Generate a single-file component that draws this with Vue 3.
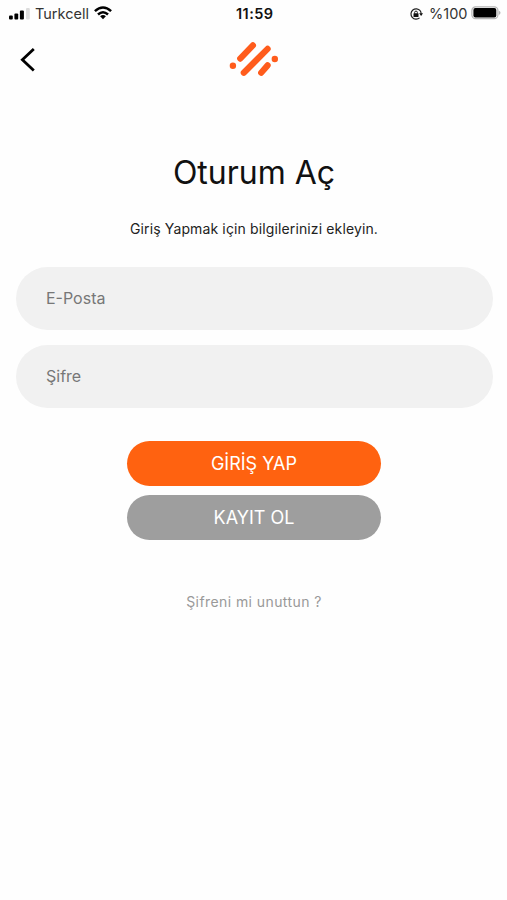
<script setup>
import { ref } from 'vue'

const email = ref('')
const password = ref('')
</script>

<template>
  <main class="screen">
    <div class="status">
      <div class="side left">
        <svg class="signal" width="21" height="13" viewBox="0 0 21 13">
          <rect x="0" y="8.5" width="3.8" height="4" rx="1" />
          <rect x="5.4" y="6.5" width="3.8" height="6" rx="1" />
          <rect x="10.9" y="3.6" width="4" height="8.9" rx="1" />
          <rect x="17" y="1" width="3.8" height="11.5" rx="1" fill="#dcdcdc" />
        </svg>
        <span class="carrier">Turkcell</span>
        <svg class="wifi" width="18" height="14" viewBox="0 0 18 14" fill="none" stroke="#000" stroke-width="2.5">
          <path d="M.9 5.2Q9-2.2 17.1 5.2" />
          <path d="M4 8.5Q9 3.9 14 8.5" />
          <path d="M6.1 10.3Q9 7.7 11.9 10.3L9 13.2Z" fill="#000" stroke="none" />
        </svg>
      </div>
      <span class="time">11:59</span>
      <div class="side right">
        <svg class="lock" width="14" height="14" viewBox="0 0 14 14" fill="none" stroke="#222">
          <path d="M11.2 3.7A5.2 5.2 0 1 0 10.6 10.9" stroke-width="1.2" />
          <path d="M10.2 6.3H14L12.1 9Z" fill="#111" stroke="none" />
          <path d="M11.2 3.7Q12.1 5 12.1 7" stroke-width="1.2" />
          <rect x="4.5" y="6.2" width="5" height="3.8" rx=".5" fill="#111" stroke="none" />
          <path d="M5.6 6.7V5.5a1.4 1.4 0 0 1 2.8 0v1.2" />
        </svg>
        <span class="percent">%100</span>
        <svg class="battery" width="30" height="14" viewBox="0 0 30 14">
          <rect x=".9" y=".9" width="26" height="11.8" rx="3.6" fill="#fff" stroke="#b5b5b5" stroke-width="1.2" />
          <rect x="2.4" y="2.1" width="22.9" height="9.4" rx="2" />
          <path d="M27.8 4.7q1.7.5 1.7 2.1t-1.7 2.1Z" fill="#b5b5b5" />
        </svg>
      </div>
    </div>

    <header class="nav">
      <button class="back" type="button" aria-label="Geri">
        <svg width="18" height="26" viewBox="0 0 18 26" fill="none" stroke="#000" stroke-width="2.8">
          <path d="M15.8 2L4.4 12.7L15.8 23.4" />
        </svg>
      </button>
      <svg class="logo" width="50" height="38" viewBox="0 0 50 38" fill="none" stroke="#ff5c1c" stroke-width="6.2" stroke-linecap="round">
        <path d="M11.2 18.6L23.9 5.4M14.8 32.7L38.6 8.9M32.2 32.7L38.6 25.4" />
        <circle cx="3.9" cy="25.8" r="3.2" fill="#ff5c1c" stroke="none" />
        <circle cx="45.8" cy="19" r="3.2" fill="#ff5c1c" stroke="none" />
      </svg>
    </header>

    <form class="login" @submit.prevent>
      <h1>Oturum Aç</h1>
      <p class="hint">Giriş Yapmak için bilgilerinizi ekleyin.</p>
      <input v-model="email" class="field" type="text" placeholder="E-Posta">
      <input v-model="password" class="field" type="password" placeholder="Şifre">
      <div class="actions">
        <button class="action primary" type="submit">GİRİŞ YAP</button>
        <button class="action secondary" type="button">KAYIT OL</button>
      </div>
      <a class="forgot">Şifreni mi unuttun ?</a>
    </form>
  </main>
</template>

<style>
body {
  background: #fefefe;
}
</style>

<style scoped>
.screen {
  box-sizing: border-box;
  height: 900px;
  overflow: hidden;
  background: #fefefe;
  color: #111;
  font-family: Inter, "Liberation Sans", sans-serif;
}
.status {
  display: grid;
  grid-template-columns: 1fr auto 1fr;
  align-items: center;
  height: 28px;
  padding: 0 6.5px 0 9px;
}
.side {
  display: flex;
  align-items: center;
}
.right {
  justify-content: flex-end;
}
.status span {
  font-size: 14.5px;
  line-height: 28px;
  white-space: nowrap;
}
.signal {
  margin-bottom: 1px;
}
.carrier {
  margin-left: 5px;
  color: #333;
}
.wifi {
  margin: 0 0 2px 5px;
}
.status .time {
  font-weight: 600;
  letter-spacing: 0.45px;
}
.percent {
  margin: 0 3px 0 6px;
  color: #333;
}
.battery {
  margin-bottom: 3px;
}
.nav {
  display: grid;
  grid-template-columns: 1fr auto 1fr;
  height: 64px;
  padding: 0 18px;
}
.back {
  width: 18px;
  height: 26px;
  margin-top: 19px;
  padding: 0;
  border: 0;
  background: none;
}
.back svg {
  display: block;
}
.logo {
  margin-top: 12px;
}
.login {
  display: flex;
  flex-direction: column;
  align-items: center;
  padding: 60px 14.5px 0 15.5px;
}
h1 {
  margin: 0;
  color: #111;
  font-size: 32px;
  font-weight: 400;
  line-height: 42px;
}
.hint {
  margin: 25px 0 28px;
  color: #222;
  font-size: 14px;
  line-height: 20px;
  letter-spacing: 0.13px;
}
.field {
  box-sizing: border-box;
  width: 100%;
  height: 63px;
  margin: 0 0 15px;
  padding: 0 30.5px 2px;
  border: 0;
  border-radius: 32px;
  outline: 0;
  background: #f1f1f1;
  font: 400 16px Inter, "Liberation Sans", sans-serif;
}
.field::placeholder {
  color: #777;
  opacity: 1;
}
.actions {
  display: grid;
  gap: 9px;
  width: 254px;
  margin-top: 18px;
}
.action {
  height: 45px;
  padding: 0;
  border: 0;
  border-radius: 23px;
  color: #fff;
  font: 400 18px Inter, "Liberation Sans", sans-serif;
}
.primary {
  background: #ff6210;
}
.secondary {
  background: #9e9e9e;
}
.forgot {
  margin-top: 52px;
  color: #999;
  font-size: 14px;
  line-height: 20px;
  letter-spacing: 0.42px;
}
</style>
